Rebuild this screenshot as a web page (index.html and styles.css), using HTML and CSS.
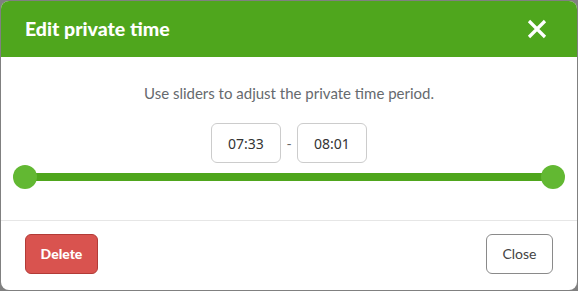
FILE: index.html
```html
<!DOCTYPE html>
<html>
<head>
<meta charset="utf-8">
<link rel="stylesheet" href="styles.css">
</head>
<body>
<div class="dialog">
  <div class="header">
    <h1 class="title">Edit private time</h1>
    <button class="x-btn" aria-label="Close">
      <svg width="20" height="20" viewBox="0 0 20 20"><path d="M2 2 L18 18 M18 2 L2 18" stroke="#fff" stroke-width="3.2" stroke-linecap="butt"/></svg>
    </button>
  </div>
  <div class="body">
    <p class="hint">Use sliders to adjust the private time period.</p>
    <div class="times">
      <div class="time">07:33</div>
      <span class="dash">-</span>
      <div class="time">08:01</div>
    </div>
    <div class="slider">
      <div class="track"></div>
      <div class="thumb thumb-start"></div>
      <div class="thumb thumb-end"></div>
    </div>
  </div>
  <div class="footer">
    <button class="btn btn-delete">Delete</button>
    <button class="btn btn-close">Close</button>
  </div>
</div>
</body>
</html>
```

FILE: styles.css
```css
html, body {
  margin: 0;
  padding: 0;
}
body {
  background: #808080;
  width: 578px;
  height: 291px;
  padding: 1px;
  box-sizing: border-box;
  font-family: "Lato", "Noto Sans", sans-serif;
}
.dialog {
  width: 576px;
  height: 289px;
  background: #fff;
  border-radius: 8px;
  overflow: hidden;
  display: flex;
  flex-direction: column;
}
.header {
  background: #4fa61d;
  height: 56px;
  display: flex;
  align-items: center;
  justify-content: space-between;
  padding: 0 30px 0 24px;
  flex-shrink: 0;
}
.title {
  margin: 0;
  color: #fff;
  font-size: 19.5px;
  font-weight: 900;
  padding-bottom: 1px;
}
.x-btn {
  background: none;
  border: 0;
  padding: 0;
  width: 20px;
  height: 20px;
  display: flex;
  cursor: pointer;
}
.body {
  height: 164px;
  border-bottom: 1px solid #e6e6e6;
  display: flex;
  flex-direction: column;
  align-items: center;
  padding-top: 26px;
  box-sizing: border-box;
}
.hint {
  margin: 0;
  color: #666a6e;
  font-size: 15px;
  line-height: 20px;
}
.times {
  display: flex;
  align-items: center;
  gap: 5px;
  margin-top: 20px;
}
.time {
  width: 68px;
  height: 38px;
  border: 1px solid #cccccc;
  border-radius: 6px;
  display: flex;
  align-items: center;
  justify-content: center;
  font-family: "Noto Sans", sans-serif;
  font-size: 14px;
  color: #333;
}
.dash {
  color: #666;
  font-size: 14px;
  width: 6px;
  text-align: center;
}
.slider {
  position: relative;
  align-self: stretch;
  margin: 2px 24px 0 24px;
  height: 24px;
}
.track {
  position: absolute;
  left: 0;
  right: 0;
  top: 8px;
  height: 8px;
  background: #4fa61d;
}
.thumb {
  position: absolute;
  top: 0;
  width: 24px;
  height: 24px;
  border-radius: 50%;
  background: #62b832;
}
.thumb-start { left: -12px; }
.thumb-end { right: -12px; }
.footer {
  flex: 1;
  display: flex;
  align-items: center;
  justify-content: space-between;
  padding: 0 24px 4px 24px;
}
.btn {
  height: 40px;
  border-radius: 6px;
  font-family: "Lato", "Noto Sans", sans-serif;
  font-size: 14px;
  cursor: pointer;
}
.btn-delete {
  width: 73px;
  background: #d9534f;
  border: 1px solid #b23b37;
  color: #fff;
  font-weight: 900;
}
.btn-close {
  width: 67px;
  background: #fff;
  border: 1px solid #8a8a8a;
  color: #444;
}
```
